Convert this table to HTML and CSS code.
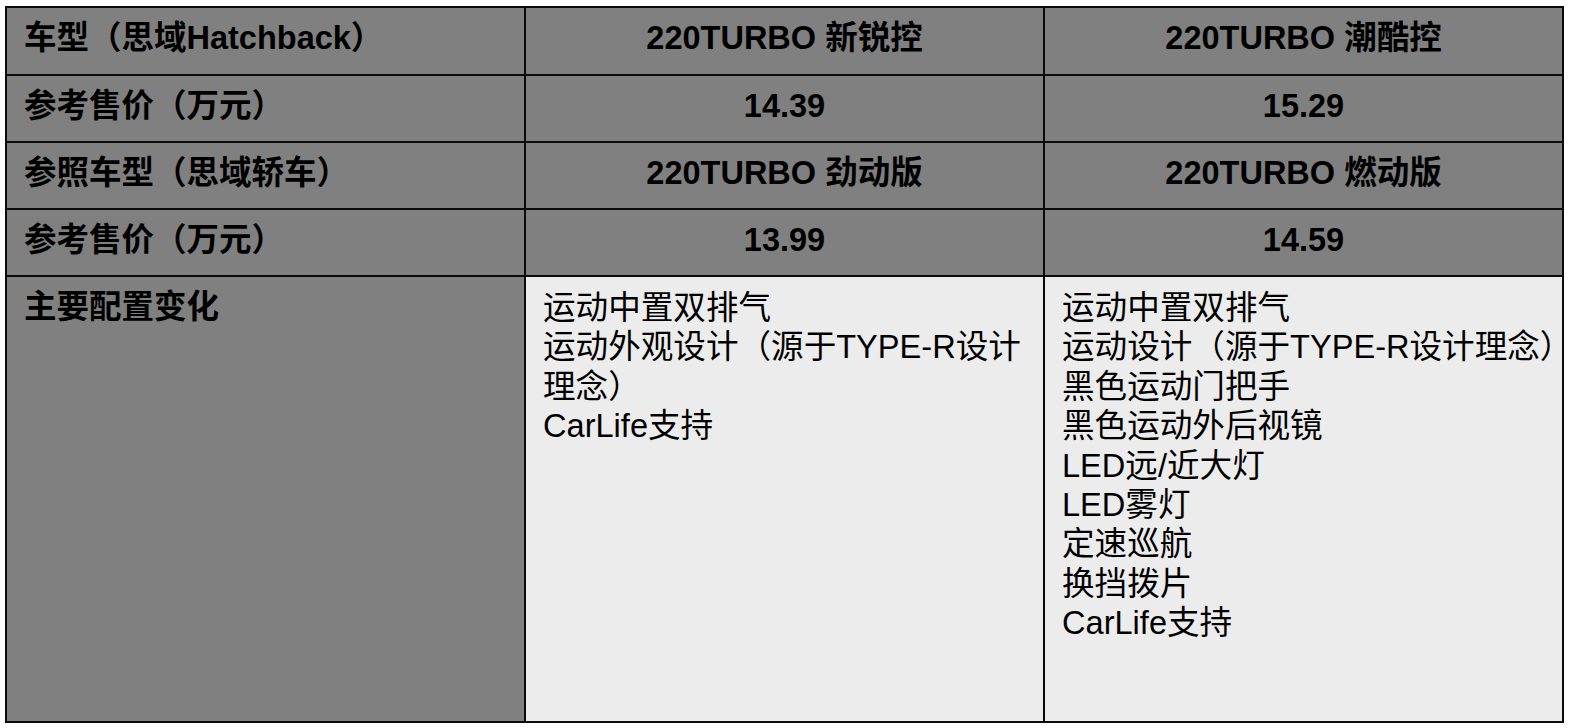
FILE: index.html
```html
<!DOCTYPE html>
<html lang="zh-CN">
<head>
<meta charset="utf-8">
<title>思域Hatchback 配置对比</title>
<link rel="stylesheet" href="styles.css">
</head>
<body>
<div class="page">
  <div class="grid">
    <div class="cell head">车型（思域Hatchback）</div>
    <div class="cell head center">220TURBO 新锐控</div>
    <div class="cell head center">220TURBO 潮酷控</div>

    <div class="cell head">参考售价（万元）</div>
    <div class="cell head center">14.39</div>
    <div class="cell head center">15.29</div>

    <div class="cell head">参照车型（思域轿车）</div>
    <div class="cell head center">220TURBO 劲动版</div>
    <div class="cell head center">220TURBO 燃动版</div>

    <div class="cell head">参考售价（万元）</div>
    <div class="cell head center">13.99</div>
    <div class="cell head center">14.59</div>

    <div class="cell head top">主要配置变化</div>
    <div class="cell list">
      <div class="item">运动中置双排气</div>
      <div class="item">运动外观设计（源于TYPE-R设计理念）</div>
      <div class="item">CarLife支持</div>
    </div>
    <div class="cell list">
      <div class="item nowrap">运动中置双排气</div>
      <div class="item nowrap">运动设计（源于TYPE-R设计理念）</div>
      <div class="item nowrap">黑色运动门把手</div>
      <div class="item nowrap">黑色运动外后视镜</div>
      <div class="item nowrap">LED远/近大灯</div>
      <div class="item nowrap">LED雾灯</div>
      <div class="item nowrap">定速巡航</div>
      <div class="item nowrap">换挡拨片</div>
      <div class="item nowrap">CarLife支持</div>
    </div>
  </div>
</div>
</body>
</html>
```

FILE: styles.css
```css
html, body {
  margin: 0;
  padding: 0;
  background: #ffffff;
}

.page {
  padding: 6px 0 0 5px;
}

.grid {
  display: grid;
  grid-template-columns: repeat(3, 517px);
  grid-template-rows: 66px 65px 65px 65px 444px;
  gap: 2px;
  padding: 2px;
  width: max-content;
  background: #0a0a0a;
  font-family: "Liberation Sans", "Noto Sans CJK SC", sans-serif;
  font-size: 32.5px;
  color: #000;
}

.cell {
  background: #808080;
  display: flex;
  align-items: center;
  padding: 0 0 5px 17px;
  line-height: 39px;
  white-space: nowrap;
  overflow: visible;
}

.head {
  font-weight: bold;
}

.center {
  justify-content: center;
  padding-left: 0;
}

.top {
  align-items: flex-start;
  padding-top: 11px;
}

.list {
  background: #ececec;
  display: block;
  padding: 11px 0 0 17px;
  white-space: normal;
  font-size: 32.6px;
}

.item {
  line-height: 39.4px;
}

.nowrap {
  white-space: nowrap;
}
```
